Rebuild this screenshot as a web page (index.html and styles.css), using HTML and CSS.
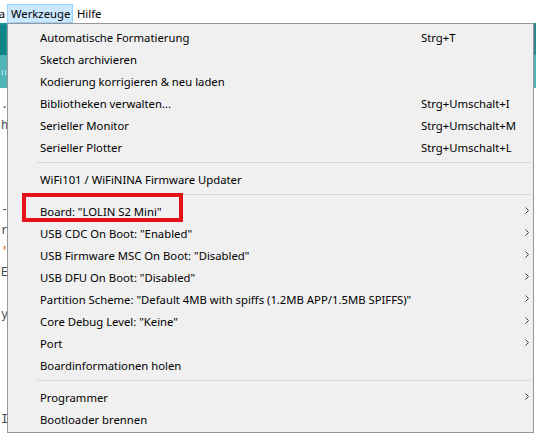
FILE: index.html
```html
<!DOCTYPE html>
<html lang="de">
<head>
<meta charset="utf-8">
<title>Werkzeuge</title>
<link rel="stylesheet" href="styles.css">
</head>
<body>
<div class="app">
  <div class="menubar">
    <span class="mb-cut"><span>a</span></span>
    <span class="mb-item active">Werkzeuge</span>
    <span class="mb-item">Hilfe</span>
  </div>
  <div class="toolbar">
    <div class="tb-top"><span class="tb-btn"></span><span class="tb-fill"></span><span class="tb-right"></span></div>
    <div class="tb-tabs"><span class="tb-mark">ıı</span></div>
  </div>
  <div class="editor">
    <div class="line">.</div>
    <div class="line">h</div>
    <div class="line"> </div>
    <div class="line"> </div>
    <div class="line"> </div>
    <div class="line">-</div>
    <div class="line">r</div>
    <div class="line"><span class="kw">'</span></div>
    <div class="line">E</div>
    <div class="line"> </div>
    <div class="line">y</div>
    <div class="line"> </div>
    <div class="line"> </div>
    <div class="line"> </div>
    <div class="line"> </div>
    <div class="line">I</div>
  </div>

  <div class="dropdown">
    <div class="item"><span class="label">Automatische Formatierung</span><span class="shortcut">Strg+T</span></div>
    <div class="item"><span class="label">Sketch archivieren</span></div>
    <div class="item"><span class="label">Kodierung korrigieren &amp; neu laden</span></div>
    <div class="item"><span class="label">Bibliotheken verwalten...</span><span class="shortcut">Strg+Umschalt+I</span></div>
    <div class="item"><span class="label">Serieller Monitor</span><span class="shortcut">Strg+Umschalt+M</span></div>
    <div class="item"><span class="label">Serieller Plotter</span><span class="shortcut">Strg+Umschalt+L</span></div>
    <div class="sep"></div>
    <div class="item"><span class="label">WiFi101 / WiFiNINA Firmware Updater</span></div>
    <div class="sep"></div>
    <div class="item board"><span class="label">Board: "LOLIN S2 Mini"</span><span class="arrow"><svg width="4" height="7" viewBox="0 0 4 7"><polyline points="0.5,0.5 3.5,3.5 0.5,6.5" /></svg></span><span class="highlight"></span></div>
    <div class="item"><span class="label">USB CDC On Boot: "Enabled"</span><span class="arrow"><svg width="4" height="7" viewBox="0 0 4 7"><polyline points="0.5,0.5 3.5,3.5 0.5,6.5" /></svg></span></div>
    <div class="item"><span class="label">USB Firmware MSC On Boot: "Disabled"</span><span class="arrow"><svg width="4" height="7" viewBox="0 0 4 7"><polyline points="0.5,0.5 3.5,3.5 0.5,6.5" /></svg></span></div>
    <div class="item"><span class="label">USB DFU On Boot: "Disabled"</span><span class="arrow"><svg width="4" height="7" viewBox="0 0 4 7"><polyline points="0.5,0.5 3.5,3.5 0.5,6.5" /></svg></span></div>
    <div class="item"><span class="label wide">Partition Scheme: "Default 4MB with spiffs (1.2MB APP/1.5MB SPIFFS)"</span><span class="arrow"><svg width="4" height="7" viewBox="0 0 4 7"><polyline points="0.5,0.5 3.5,3.5 0.5,6.5" /></svg></span></div>
    <div class="item"><span class="label">Core Debug Level: "Keine"</span><span class="arrow"><svg width="4" height="7" viewBox="0 0 4 7"><polyline points="0.5,0.5 3.5,3.5 0.5,6.5" /></svg></span></div>
    <div class="item"><span class="label">Port</span><span class="arrow"><svg width="4" height="7" viewBox="0 0 4 7"><polyline points="0.5,0.5 3.5,3.5 0.5,6.5" /></svg></span></div>
    <div class="item"><span class="label">Boardinformationen holen</span></div>
    <div class="sep"></div>
    <div class="item"><span class="label">Programmer</span><span class="arrow"><svg width="4" height="7" viewBox="0 0 4 7"><polyline points="0.5,0.5 3.5,3.5 0.5,6.5" /></svg></span></div>
    <div class="item"><span class="label">Bootloader brennen</span></div>
  </div>
</div>
</body>
</html>
```
FILE: styles.css
```css
* { box-sizing: border-box; }
html, body { margin: 0; padding: 0; }
body {
  width: 536px;
  height: 434px;
  overflow: hidden;
  background: #ffffff;
  font-family: "Noto Sans", "Open Sans", sans-serif;
  font-size: 11.3px;
  color: #000;
}
.app {
  position: relative;
  width: 536px;
  height: 434px;
  overflow: hidden;
}

/* menu bar */
.menubar {
  height: 23px;
  background: #ffffff;
  display: flex;
  align-items: flex-start;
  padding-top: 4px;
}
.mb-cut {
  width: 7px;
  height: 19px;
  overflow: hidden;
  display: flex;
  justify-content: flex-end;
  line-height: 19px;
}
.mb-cut span { margin-right: 2px; flex: none; }
.mb-item {
  height: 19px;
  line-height: 17px;
  padding: 0 3px;
  border: 1px solid transparent;
}
.mb-item.active {
  background: #cce8ff;
  border-color: #99d1ff;
  width: 66px;
}

/* toolbar behind menu */
.toolbar { height: 65px; display: flex; flex-direction: column; }
.tb-top { height: 32px; background: #14969a; display: flex; }
.tb-btn { width: 6px; background: #0d8488; margin-top: 2px; }
.tb-fill { flex: 1; }
.tb-right { width: 2px; background: #2c8a8e; }
.tb-tabs {
  height: 33px;
  background: #4fb3b7;
  color: #d9f2f3;
  font-size: 9px;
  line-height: 33px;
  padding-left: 1px;
  overflow: hidden;
}
.tb-mark { letter-spacing: 1px; }

/* editor behind menu */
.editor {
  padding-top: 7px;
  font-family: "Liberation Mono", monospace;
  font-size: 12px;
  color: #434f54;
}
.line {
  height: 21px;
  line-height: 21px;
  white-space: pre;
  margin-left: 1px;
}
.kw { color: #d35400; }

/* dropdown menu */
.dropdown {
  position: absolute;
  left: 7px;
  top: 23px;
  width: 527px;
  background: #f0f0f0;
  border: 1px solid #979797;
  padding: 3px 0 1px 0;
}
.item {
  position: relative;
  height: 22px;
  line-height: 22px;
  display: grid;
  grid-template-columns: 381px 1fr 11px;
  align-items: center;
  padding-left: 32px;
  white-space: nowrap;
}
.label { grid-column: 1; }
.label.wide { overflow: visible; }
.shortcut { grid-column: 2; }
.arrow {
  grid-column: 3;
  display: flex;
  padding-left: 3px;
  margin-bottom: 3px;
}
.arrow svg { display: block; }
.arrow polyline { fill: none; stroke: #3c3c3c; stroke-width: 1; }
.sep {
  height: 0;
  margin: 3px 2px 6px 29px;
  border-top: 1px solid #d7d7d7;
}
.highlight {
  position: absolute;
  left: 14px;
  top: -8px;
  width: 161px;
  height: 29px;
  border: 4px solid #e5121a;
}
```
